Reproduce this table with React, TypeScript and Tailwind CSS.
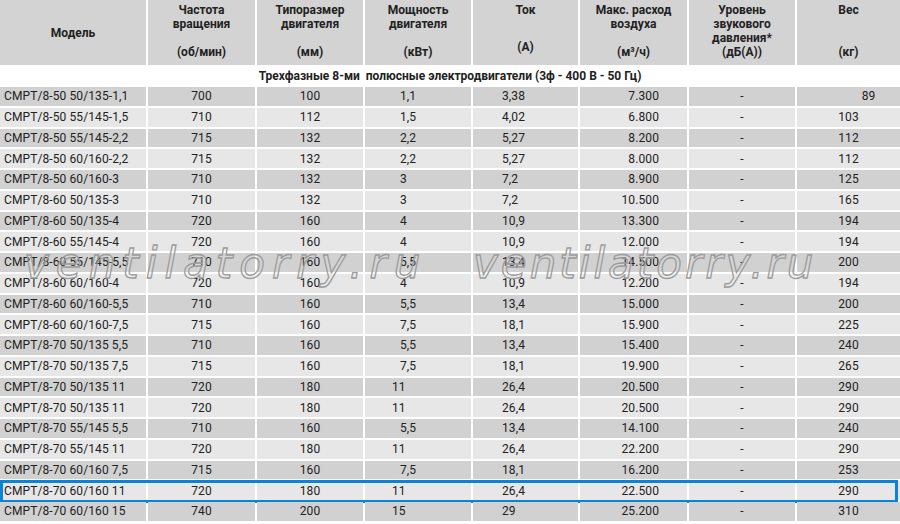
import React from "react";

type Row = [string, string, string, string, string, string, string, string];

const rows: Row[] = [
  ["СМРТ/8-50 50/135-1,1", "700", "100", "1,1", "3,38", "7.300", "-", "89"],
  ["СМРТ/8-50 55/145-1,5", "710", "112", "1,5", "4,02", "6.800", "-", "103"],
  ["СМРТ/8-50 55/145-2,2", "715", "132", "2,2", "5,27", "8.200", "-", "112"],
  ["СМРТ/8-50 60/160-2,2", "715", "132", "2,2", "5,27", "8.000", "-", "112"],
  ["СМРТ/8-50 60/160-3", "710", "132", "3", "7,2", "8.900", "-", "125"],
  ["СМРТ/8-60 50/135-3", "710", "132", "3", "7,2", "10.500", "-", "165"],
  ["СМРТ/8-60 50/135-4", "720", "160", "4", "10,9", "13.300", "-", "194"],
  ["СМРТ/8-60 55/145-4", "720", "160", "4", "10,9", "12.000", "-", "194"],
  ["СМРТ/8-60 55/145-5,5", "710", "160", "5,5", "13,4", "14.500", "-", "200"],
  ["СМРТ/8-60 60/160-4", "720", "160", "4", "10,9", "12.200", "-", "194"],
  ["СМРТ/8-60 60/160-5,5", "710", "160", "5,5", "13,4", "15.000", "-", "200"],
  ["СМРТ/8-60 60/160-7,5", "715", "160", "7,5", "18,1", "15.900", "-", "225"],
  ["СМРТ/8-70 50/135 5,5", "710", "160", "5,5", "13,4", "15.400", "-", "240"],
  ["СМРТ/8-70 50/135 7,5", "715", "160", "7,5", "18,1", "19.900", "-", "265"],
  ["СМРТ/8-70 50/135 11", "720", "180", "11", "26,4", "20.500", "-", "290"],
  ["СМРТ/8-70 50/135 11", "720", "180", "11", "26,4", "20.500", "-", "290"],
  ["СМРТ/8-70 55/145 5,5", "710", "160", "5,5", "13,4", "14.100", "-", "240"],
  ["СМРТ/8-70 55/145 11", "720", "180", "11", "26,4", "22.200", "-", "290"],
  ["СМРТ/8-70 60/160 7,5", "715", "160", "7,5", "18,1", "16.200", "-", "253"],
  ["СМРТ/8-70 60/160 11", "720", "180", "11", "26,4", "22.500", "-", "290"],
  ["СМРТ/8-70 60/160 15", "740", "200", "15", "29", "25.200", "-", "310"],
];

const cols =
  "grid grid-cols-[146px_107px_106px_106px_105px_107px_106px_1fr] gap-x-[2px]";

function HeaderCell({ lines, unit }: { lines: string[]; unit: string }) {
  const filled = [...lines];
  while (filled.length < 3) filled.push("");
  return (
    <div className="bg-[#d3d3d3] flex flex-col items-center pt-[3px]">
      {filled.map((l, i) => (
        <div key={i} className="h-[14px] leading-[14px] whitespace-nowrap">
          {l}
        </div>
      ))}
      <div className="h-[14px] leading-[14px] whitespace-nowrap">{unit}</div>
    </div>
  );
}

export default function App() {
  return (
    <div
      className="relative w-[900px] h-[524px] overflow-hidden bg-white text-[#222]"
      style={{ fontFamily: "Roboto, 'Noto Sans', sans-serif" }}
    >
      {/* header */}
      <div className={`${cols} h-[65px] text-[12px] font-bold`}>
        <div className="bg-[#d3d3d3] flex items-center justify-center">
          Модель
        </div>
        <HeaderCell lines={["Частота", "вращения"]} unit="(об/мин)" />
        <HeaderCell lines={["Типоразмер", "двигателя"]} unit="(мм)" />
        <HeaderCell lines={["Мощность", "двигателя"]} unit="(кВт)" />
        <div className="bg-[#d3d3d3] flex flex-col items-center pt-[3px]">
          <div className="h-[14px] leading-[14px]">Ток</div>
          <div className="mt-[23px] h-[14px] leading-[14px]">(А)</div>
        </div>
        <HeaderCell lines={["Макс. расход", "воздуха"]} unit="(м³/ч)" />
        <HeaderCell
          lines={["Уровень", "звукового", "давления*"]}
          unit="(дБ(А))"
        />
        <HeaderCell lines={["Вес"]} unit="(кг)" />
      </div>

      {/* sub header */}
      <div className="h-[22px] flex items-center justify-center text-[12px] font-bold whitespace-pre">
        {"Трехфазные 8-ми  полюсные электродвигатели (3ф - 400 В - 50 Гц)"}
      </div>

      {/* body */}
      <div className="flex flex-col gap-y-[2px] text-[12px] tracking-[0.1px]">
        {rows.map((r, i) => {
          const bg = i % 2 === 0 ? "bg-[#d1d1d1]" : "bg-[#e7e7e7]";
          const cell = `${bg} h-[18.75px] flex items-center whitespace-nowrap`;
          return (
            <div key={i} className={`relative ${cols}`}>
              <div className={`${cell} pl-[4px]`}>{r[0]}</div>
              <div className={`${cell} justify-center`}>{r[1]}</div>
              <div className={`${cell} justify-center`}>{r[2]}</div>
              <div
                className={`${cell} ${
                  r[3].length === 2 ? "pl-[27px]" : "pl-[35px]"
                }`}
              >
                {r[3]}
              </div>
              <div className={`${cell} pl-[29px]`}>{r[4]}</div>
              <div className={`${cell} justify-end pr-[28px]`}>{r[5]}</div>
              <div className={`${cell} justify-center`}>{r[6]}</div>
              <div
                className={`${cell} justify-center ${
                  r[7].length === 2 ? "pl-[40px]" : ""
                }`}
              >
                {r[7]}
              </div>
              {i === 19 && (
                <div className="absolute left-0 right-[2px] -top-[1.5px] -bottom-[2.5px] border-[3px] border-[#0a84d6] pointer-events-none" />
              )}
            </div>
          );
        })}
      </div>

      {/* watermarks */}
      <div
        className="absolute left-[24px] top-[243px] text-[42px] leading-[42px] italic text-[rgba(255,255,255,0.12)] tracking-[7px] [-webkit-text-stroke:1.3px_#9c9c9c] pointer-events-none whitespace-nowrap"
        style={{ fontFamily: "'DejaVu Sans', sans-serif" }}
      >
        ventilatorry.ru
      </div>
      <div
        className="absolute left-[473px] top-[243px] text-[42px] leading-[42px] italic text-[rgba(255,255,255,0.12)] tracking-[3px] [-webkit-text-stroke:1.3px_#9c9c9c] pointer-events-none whitespace-nowrap"
        style={{ fontFamily: "'DejaVu Sans', sans-serif" }}
      >
        ventilatorry.ru
      </div>
    </div>
  );
}
